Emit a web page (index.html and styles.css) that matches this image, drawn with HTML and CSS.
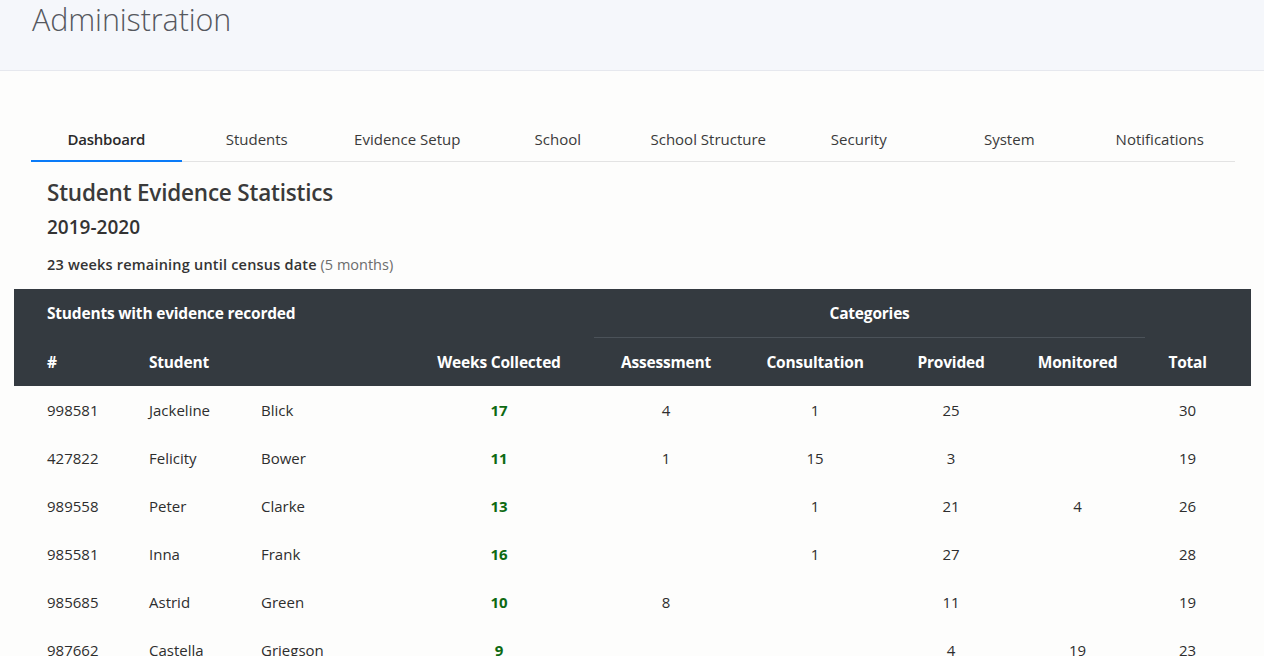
FILE: index.html
```html
<!DOCTYPE html>
<html lang="en">
<head>
<meta charset="utf-8">
<title>Administration</title>
<link rel="stylesheet" href="styles.css">
</head>
<body>
<header class="page-header">
  <h1 class="page-title">Administration</h1>
</header>
<main class="content">
  <nav class="tabs">
    <a class="tab active">Dashboard</a>
    <a class="tab">Students</a>
    <a class="tab">Evidence Setup</a>
    <a class="tab">School</a>
    <a class="tab">School Structure</a>
    <a class="tab">Security</a>
    <a class="tab">System</a>
    <a class="tab">Notifications</a>
  </nav>
  <section class="summary">
    <h2 class="stats-title">Student Evidence Statistics</h2>
    <h3 class="year">2019-2020</h3>
    <p class="census"><strong>23 weeks remaining until census date</strong> <span class="muted">(5 months)</span></p>
  </section>
  <table class="stats">
    <colgroup>
      <col class="c-id"><col class="c-first"><col class="c-last"><col class="c-weeks">
      <col class="c-assess"><col class="c-consult"><col class="c-prov"><col class="c-mon"><col class="c-total">
    </colgroup>
    <thead>
      <tr>
        <th colspan="4" class="left first">Students with evidence recorded</th>
        <th colspan="4" class="cat">Categories</th>
        <th class="last"></th>
      </tr>
      <tr>
        <th class="left first">#</th>
        <th class="left" colspan="2">Student</th>
        <th>Weeks Collected</th>
        <th>Assessment</th>
        <th>Consultation</th>
        <th>Provided</th>
        <th>Monitored</th>
        <th class="last">Total</th>
      </tr>
    </thead>
    <tbody>
      <tr><td class="left first">998581</td><td class="left">Jackeline</td><td class="left">Blick</td><td class="weeks">17</td><td>4</td><td>1</td><td>25</td><td></td><td class="last">30</td></tr>
      <tr><td class="left first">427822</td><td class="left">Felicity</td><td class="left">Bower</td><td class="weeks">11</td><td>1</td><td>15</td><td>3</td><td></td><td class="last">19</td></tr>
      <tr><td class="left first">989558</td><td class="left">Peter</td><td class="left">Clarke</td><td class="weeks">13</td><td></td><td>1</td><td>21</td><td>4</td><td class="last">26</td></tr>
      <tr><td class="left first">985581</td><td class="left">Inna</td><td class="left">Frank</td><td class="weeks">16</td><td></td><td>1</td><td>27</td><td></td><td class="last">28</td></tr>
      <tr><td class="left first">985685</td><td class="left">Astrid</td><td class="left">Green</td><td class="weeks">10</td><td>8</td><td></td><td>11</td><td></td><td class="last">19</td></tr>
      <tr><td class="left first">987662</td><td class="left">Castella</td><td class="left">Griegson</td><td class="weeks">9</td><td></td><td></td><td>4</td><td>19</td><td class="last">23</td></tr>
    </tbody>
  </table>
</main>
</body>
</html>
```

FILE: styles.css
```css
* { box-sizing: border-box; }
html, body { margin: 0; padding: 0; }
body {
  background: #fdfdfc;
  font-family: "Open Sans", "Noto Sans", sans-serif;
  font-size: 15px;
  color: #2b2b2b;
  overflow: hidden;
}
.page-header {
  height: 71px;
  background: #f5f7fb;
  border-bottom: 1px solid #e6e8ee;
  padding: 0 32px;
}
.page-title {
  margin: 0;
  font-family: "Open Sans", sans-serif;
  font-weight: 300;
  font-size: 30.5px;
  line-height: 38px;
  color: #55585e;
  letter-spacing: -0.1px;
}
.content {
  padding: 47px 14px 0 14px;
}
.tabs {
  display: grid;
  grid-template-columns: repeat(8, 1fr);
  margin: 0 15px 0 17px;
  border-bottom: 1px solid #e3e3e3;
}
.tab {
  display: block;
  text-align: center;
  font-size: 15px;
  line-height: 20px;
  padding: 11px 0 11px 0;
  color: #3a3a3a;
  border-bottom: 2px solid transparent;
  margin-bottom: -1px;
  letter-spacing: 0;
}
.tab.active {
  border-bottom-color: #0a7bf8;
  color: #2a2a2a;
  font-weight: 600;
  letter-spacing: -0.2px;
}
.summary {
  padding: 15px 33px 0 33px;
}
.stats-title {
  margin: 0;
  font-size: 22.5px;
  font-weight: 600;
  line-height: 32px;
  color: #3a3a3a;
  letter-spacing: -0.2px;
}
.year {
  margin: 0;
  padding-top: 4px;
  font-size: 19px;
  font-weight: 600;
  line-height: 28px;
  color: #333;
}
.census {
  margin: 0;
  padding-top: 14px;
  padding-bottom: 14px;
  font-size: 14.5px;
  line-height: 20px;
  color: #333;
}
.census strong { font-weight: 600; letter-spacing: 0.2px; }
.muted { color: #6c6c6c; font-weight: 400; }
.stats {
  width: 1237px;
  border-collapse: collapse;
  table-layout: fixed;
}
.c-id { width: 123px; }
.c-first { width: 112px; }
.c-last { width: 155px; }
.c-weeks { width: 190px; }
.c-assess { width: 144px; }
.c-consult { width: 154px; }
.c-prov { width: 118px; }
.c-mon { width: 135px; }
.c-total { width: 106px; }
.stats th, .stats td {
  padding: 0 12px;
  height: 48px;
  text-align: center;
  white-space: nowrap;
  line-height: 24px;
  vertical-align: middle;
}
.stats thead {
  background: #343a40;
  color: #ffffff;
}
.stats th {
  font-weight: 700;
  font-size: 15.5px;
  letter-spacing: -0.2px;
}
.stats thead tr:first-child th { height: 48px; }
.stats thead tr:last-child th { height: 49px; }
.stats th.cat {
  border-bottom: 1px solid #4b5259;
}
.stats .left { text-align: left; }
.stats .first { padding-left: 33px; }
.stats .last { padding-right: 33px; }
.stats td {
  font-size: 15px;
  color: #2e2e2e;
}
.stats td.weeks {
  font-weight: 700;
  color: #0d6a12;
}
```
